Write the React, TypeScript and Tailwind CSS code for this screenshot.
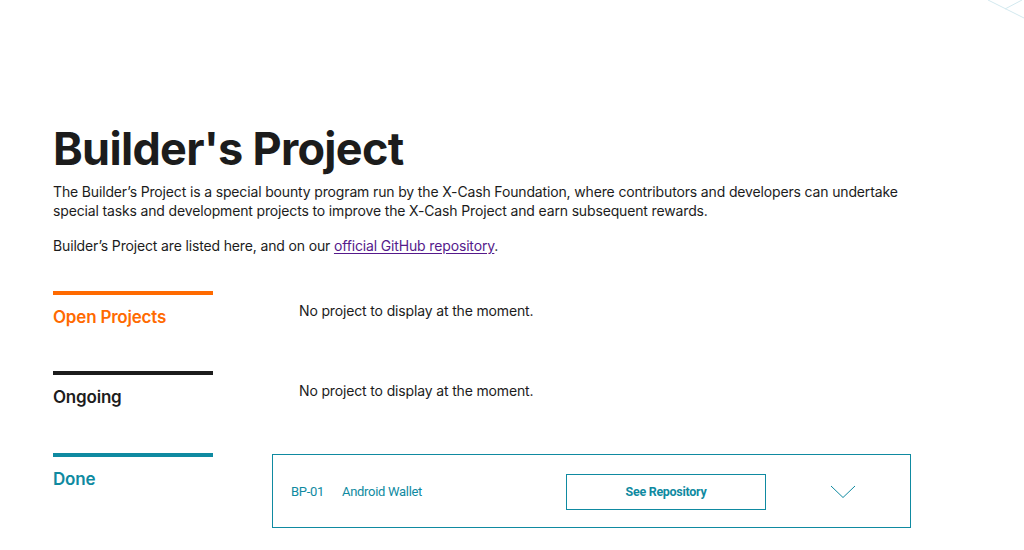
const rows = [
  { title: 'Open Projects', bar: 'bg-[#ff6a00]', text: 'text-[#ff6a00]', h: 'h-[80px]' },
  { title: 'Ongoing', bar: 'bg-[#1c1c1c]', text: 'text-[#1c1c1c]', h: 'h-[82px]' },
];

function Empty() {
  return <p className="pl-[27px] pt-[9px] text-[14px] tracking-[-0.15px] text-[#1c1c1c]">No project to display at the moment.</p>;
}

export default function App() {
  return (
    <div className="relative min-h-[550px] overflow-hidden bg-white font-['Inter','Liberation_Sans',sans-serif] text-[#1c1c1c]">
      <svg className="absolute right-0 top-0" width="40" height="22" viewBox="0 0 40 22" fill="none">
        <path d="M4 0 L40 18 M21 9 L38 0" stroke="#d3e9ef" strokeWidth="1" />
      </svg>

      <main className="pl-[53px] pt-[120px]">
        <h1 className="text-[45px] font-bold leading-[58px] tracking-[-0.7px]">Builder's Project</h1>
        <div className="mt-[4px] w-[870px] text-[14px] leading-[19px] tracking-[-0.15px]">
          <p>
            The Builder’s Project is a special bounty program run by the X-Cash Foundation, where contributors and developers can undertake special tasks and development projects to improve the X-Cash Project and earn subsequent rewards.
          </p>
          <p className="mt-[16px]">
            Builder’s Project are listed here, and on our{' '}
            <a href="#" className="text-[#551a8b] underline underline-offset-2">official GitHub repository</a>.
          </p>
        </div>

        <div className="mt-[36px] w-[858px]">
          {rows.map((r) => (
            <div key={r.title} className={`grid grid-cols-[160px_1fr] gap-x-[59px] ${r.h}`}>
              <div>
                <div className={`h-[4px] ${r.bar}`} />
                <h2 className={`mt-[10px] text-[17px] font-semibold tracking-[-0.2px] ${r.text}`}>{r.title}</h2>
              </div>
              <Empty />
            </div>
          ))}

          <div className="grid grid-cols-[160px_1fr] gap-x-[59px]">
            <div>
              <div className="h-[4px] bg-[#0f8aa1]" />
              <h2 className="mt-[10px] text-[17px] font-semibold tracking-[-0.2px] text-[#0f8aa1]">Done</h2>
            </div>
            <div className="mt-[1px] flex h-[74px] w-[639px] items-center border border-[#0f8aa1] pl-[18px] pt-[2px] font-['Roboto',sans-serif] text-[13px] tracking-[-0.3px] text-[#0f8aa1]">
              <span className="w-[51px]">BP-01</span>
              <span className="w-[224px]">Android Wallet</span>
              <button className="h-[36px] w-[200px] border border-[#0f8aa1] text-[12.5px] font-bold">See Repository</button>
              <svg className="ml-[64px]" width="26" height="14" viewBox="0 0 26 14" fill="none">
                <path d="M1 1 L13 12.5 L25 1" stroke="#0f8aa1" strokeWidth="1" />
              </svg>
            </div>
          </div>
        </div>
      </main>
    </div>
  );
}
